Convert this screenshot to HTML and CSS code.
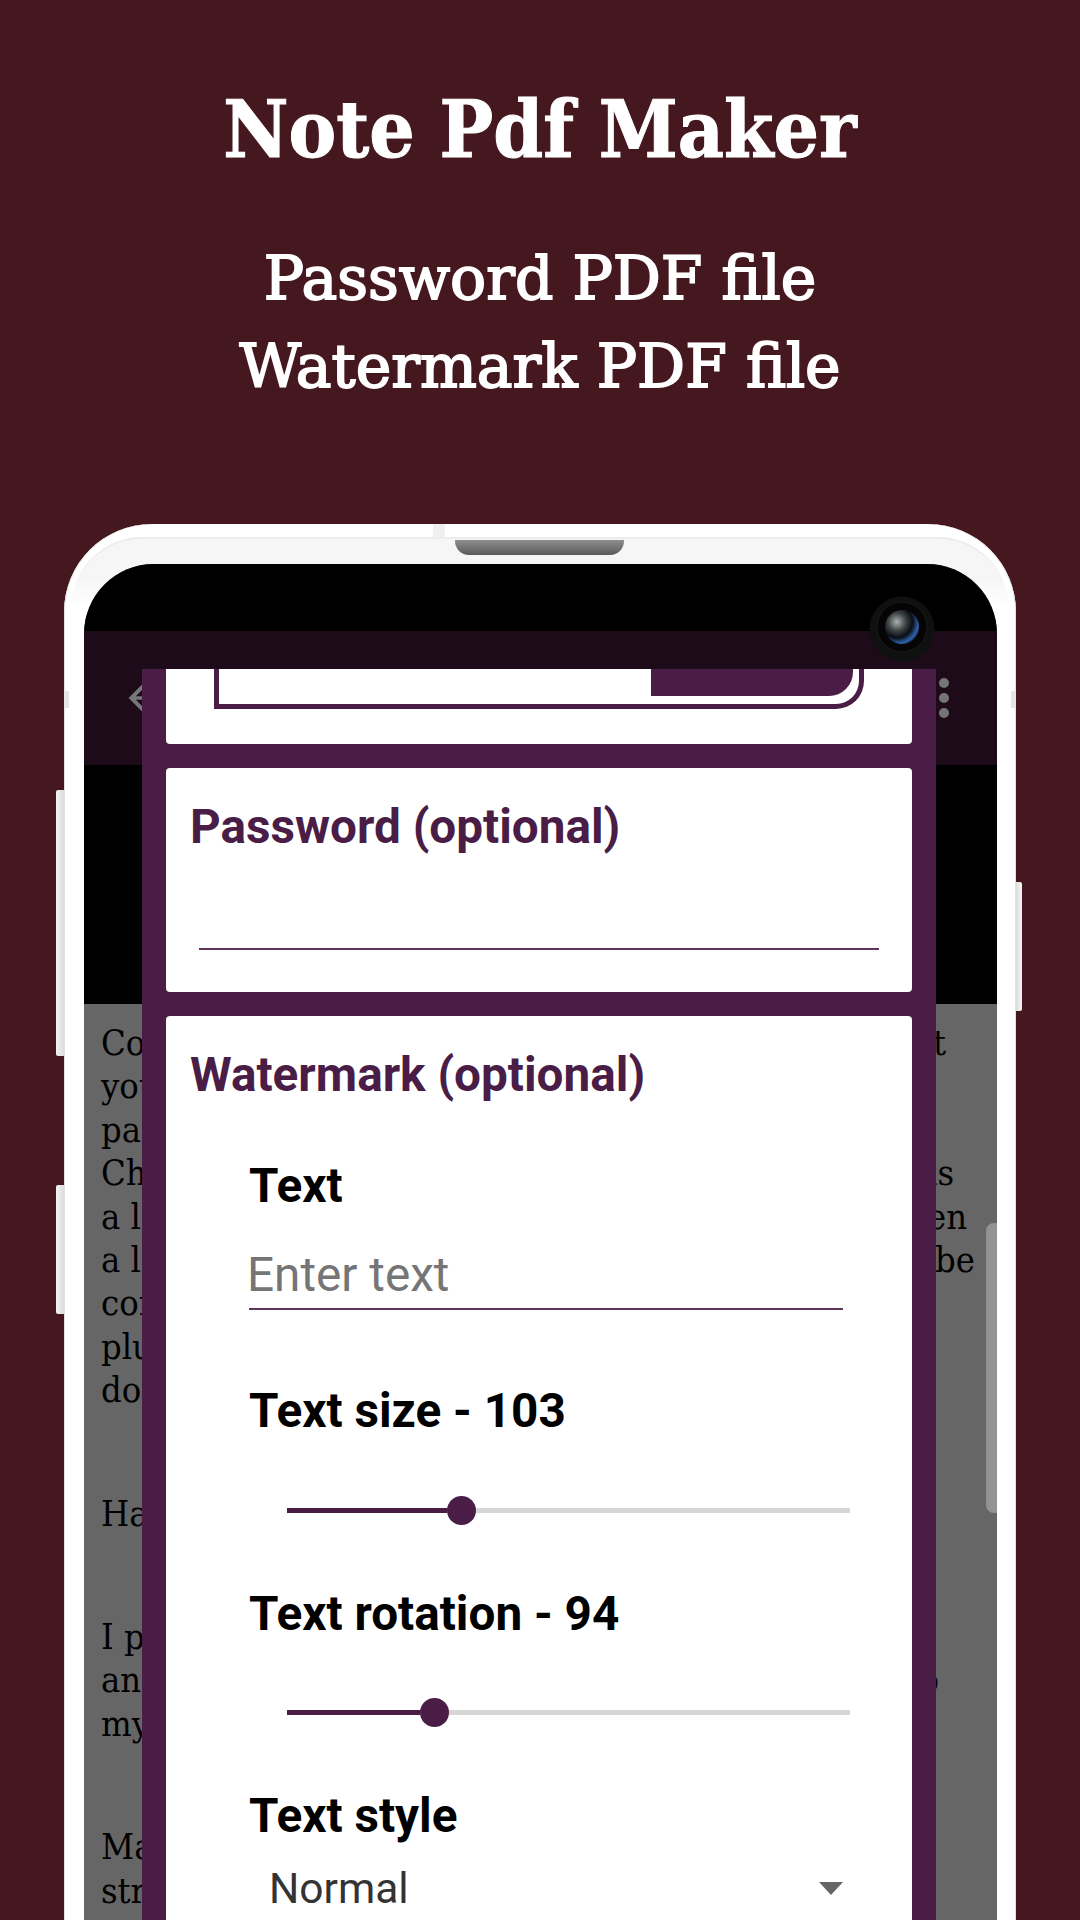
FILE: index.html
```html
<!DOCTYPE html>
<html lang="en">
<head>
<meta charset="utf-8">
<title>Note Pdf Maker</title>
<link rel="stylesheet" href="styles.css">
</head>
<body>
<header class="promo">
  <h1 class="promo-title">Note Pdf Maker</h1>
  <p class="promo-sub">Password PDF file<br>Watermark PDF file</p>
</header>
<section class="phone">
  <div class="rim"></div>
  <div class="tick tick-top"></div>
  <div class="tick tick-left"></div>
  <div class="tick tick-right"></div>
  <div class="side side-l1"></div>
  <div class="side side-l2"></div>
  <div class="side side-r"></div>
  <div class="speaker"></div>
  <svg class="camera" viewBox="0 0 66 66" aria-hidden="true">
    <defs>
      <radialGradient id="lens" cx="35%" cy="35%" r="75%">
        <stop offset="0" stop-color="#a9b3b0"/>
        <stop offset="0.35" stop-color="#3c4444"/>
        <stop offset="0.62" stop-color="#0a0d14"/>
        <stop offset="0.85" stop-color="#2f62ad"/>
        <stop offset="1" stop-color="#0c1524"/>
      </radialGradient>
    </defs>
    <circle cx="33" cy="33" r="32.5" fill="#0f1111"/>
    <circle cx="33" cy="31" r="25" fill="#050505" stroke="#1a1a1a" stroke-width="1"/>
    <circle cx="33" cy="31" r="17" fill="url(#lens)"/>
  </svg>
  <div class="screen">
    <div class="statusbar"></div>
    <div class="appbar">
      <svg class="back" viewBox="0 0 40 40" aria-hidden="true"><path d="M20 4 4 20l16 16 3-3-11-11h24v-4H12l11-11z"/></svg>
      <div class="dots"><i></i><i></i><i></i></div>
    </div>
    <div class="blackband"></div>
    <div class="doc">
      <div class="para">
        <div class="line"><span>Con</span><span class="r-t">it</span></div>
        <div class="line"><span>you</span></div>
        <div class="line"><span>pag</span></div>
        <div class="line"><span>Cha</span><span class="r-s">is</span></div>
        <div class="line"><span>a lo</span><span class="r-en">then</span></div>
        <div class="line"><span>a li</span><span class="r-be">to be</span></div>
        <div class="line"><span>com</span></div>
        <div class="line"><span>plug</span></div>
        <div class="line"><span>doc</span></div>
      </div>
      <div class="para"><div class="line"><span>Hav</span></div></div>
      <div class="para">
        <div class="line"><span>I pu</span></div>
        <div class="line"><span>and</span><span class="r-o">to</span></div>
        <div class="line"><span>my</span></div>
      </div>
      <div class="para">
        <div class="line"><span>Mak</span></div>
        <div class="line"><span>stru</span></div>
      </div>
      <div class="scrollbar"></div>
    </div>
    <div class="dialog">
      <div class="card card-top">
        <div class="box"><div class="box-btn"></div></div>
      </div>
      <div class="card card-pass">
        <h2 class="card-title">Password (optional)</h2>
        <div class="pass-line"></div>
      </div>
      <div class="card card-mark">
        <h2 class="card-title">Watermark (optional)</h2>
        <div class="fields">
          <div class="label label-text">Text</div>
          <div class="input">Enter text</div>
          <div class="label label-size">Text size - 103</div>
          <div class="slider"><div class="fill fill-size"></div><div class="thumb"></div><div class="rest"></div></div>
          <div class="label label-rot">Text rotation - 94</div>
          <div class="slider slider-rot"><div class="fill fill-rot"></div><div class="thumb"></div><div class="rest"></div></div>
          <div class="label label-style">Text style</div>
          <div class="select"><span>Normal</span><span class="caret"></span></div>
        </div>
      </div>
    </div>
  </div>
</section>
</body>
</html>
```
FILE: styles.css
```css
* { box-sizing: border-box; }
html, body { margin: 0; padding: 0; }
body {
  width: 1080px;
  height: 1920px;
  overflow: hidden;
  background: #45171f;
  font-family: Roboto, "Liberation Sans", sans-serif;
}
.promo { height: 524px; padding-top: 79px; text-align: center; color: #fff; font-family: "DejaVu Serif", serif; }
.promo-title { margin: 0; font-size: 79.4px; line-height: 100px; font-weight: 700; font-stretch: condensed; -webkit-text-stroke: 1px #fff; }
.promo-sub { margin: 55px 0 0; font-size: 60px; line-height: 88px; font-weight: 400; -webkit-text-stroke: 1.8px #fff; }

.phone {
  position: relative;
  width: 952px;
  height: 1396px;
  margin-left: 64px;
  padding: 40px 19px 0 20px;
  background: #fff;
  border-radius: 88px 88px 0 0;
  box-shadow: inset 1px 0 0 #e2e2e2, inset -1px 0 0 #e2e2e2;
}
.rim {
  position: absolute;
  top: 13px; left: 8px; right: 8px;
  height: 70px;
  border-top: 2px solid #ececec;
  border-radius: 80px 80px 0 0;
  background: linear-gradient(#f6f6f6 55%, #fff);
}
.tick { position: absolute; background: #e6e6e6; }
.tick-top { top: 0; left: 369px; width: 12px; height: 13px; background: #f0f0f0; }
.tick-left { top: 167px; left: 0; width: 5px; height: 17px; }
.tick-right { top: 167px; right: 0; width: 5px; height: 17px; }
.side { position: absolute; width: 8px; background: linear-gradient(90deg, #f4f4f4, #dcdcdc); border-radius: 2px 0 0 2px; }
.side-l1 { left: -8px; top: 266px; height: 266px; }
.side-l2 { left: -8px; top: 661px; height: 129px; }
.side-r { right: -6px; width: 6px; top: 358px; height: 129px; border-radius: 0 2px 2px 0; background: linear-gradient(90deg, #dcdcdc, #f6f6f6); }
.speaker {
  position: absolute;
  top: 16px; left: 391px;
  width: 169px; height: 15px;
  border-radius: 0 0 14px 14px;
  background: linear-gradient(#8e8e8e, #5a5a5a);
}
.camera { position: absolute; z-index: 3; left: 805px; top: 72px; width: 66px; height: 66px; }

.screen {
  position: relative;
  height: 1356px;
  overflow: hidden;
  border-radius: 70px 70px 0 0;
  background: #666;
  display: flex;
  flex-direction: column;
}
.statusbar { height: 67px; background: #000; flex: none; }
.appbar {
  height: 134px; flex: none;
  background: #1e0b1a;
  display: flex; align-items: center; justify-content: space-between;
  padding: 0 48px 0 41px;
}
.back { width: 36px; height: 36px; margin-top: -1px; fill: #777; }
.dots { display: flex; flex-direction: column; gap: 5px; margin-top: -1px; }
.dots i { display: block; width: 10px; height: 10px; border-radius: 50%; background: #757575; }
.blackband { height: 239px; background: #000; flex: none; }
.doc { position: relative; flex: 1; padding: 17px 16px 0 17px; color: #000; font: 400 36px/43.4px "DejaVu Serif", serif; font-stretch: condensed; }
.para { margin-bottom: 80px; }
.line { display: flex; justify-content: space-between; white-space: nowrap; }
.r-t { margin-right: 35px; }
.r-s { margin-right: 27px; }
.r-en { margin-right: 14px; }
.r-be { margin-right: 6px; }
.r-o { margin-right: 42px; }
.scrollbar {
  position: absolute; right: 0; top: 219px;
  width: 11px; height: 290px;
  background: #939393;
  border-radius: 8px 0 0 8px;
}

.dialog {
  position: absolute; z-index: 2;
  left: 58px; top: 105px;
  width: 794px; height: 1300px;
  padding: 0 24px;
  background: #4a1d47;
  display: flex; flex-direction: column; gap: 23.5px;
}
.card { background: #fff; border-radius: 4px; flex: none; }
.card-top { height: 75px; border-radius: 0 0 4px 4px; }
.box {
  margin: 0 48px 0 48px;
  height: 40px;
  border: 5px solid #4a1d47;
  border-top: 0;
  border-radius: 0 0 28px 0;
  padding: 0 6px 7px 0;
  display: flex; justify-content: flex-end;
}
.box-btn { width: 202px; height: 27px; background: #4a1d47; border-radius: 0 0 24px 0; }
.card-pass { height: 224.5px; padding: 31px 24px 0 24px; }
.card-title { margin: 0; font-size: 47.7px; line-height: 56px; font-weight: 700; color: #4a1d47; }
.pass-line { height: 2px; margin: 93px 9px 0 9px; background: #5c3559; }
.card-mark { height: 1000px; padding: 31px 24px 0 24px; }
.fields { padding: 0 0 0 59px; }
.label { font-size: 47.7px; line-height: 56px; font-weight: 700; color: #000; }
.label-text { margin-top: 55.4px; }
.input { width: 594px; height: 67.3px; margin-top: 29px; font-size: 47.7px; line-height: 64px; color: #757575; text-indent: -2px; border-bottom: 2px solid #5c3559; }
.label-size { margin-top: 73px; }
.slider { display: flex; align-items: center; width: 563px; height: 30px; margin: 56.3px 0 0 38px; }
.slider-rot { margin-top: 55.6px; }
.fill { height: 5px; background: #4a1d47; flex: none; }
.fill-size { width: 160px; }
.fill-rot { width: 133px; }
.thumb { width: 29px; height: 29px; border-radius: 50%; background: #4a1d47; flex: none; }
.rest { height: 5px; background: #d6d6d6; flex: 1; }
.label-rot { margin-top: 60.4px; }
.label-style { margin-top: 60.6px; }
.select { display: flex; justify-content: space-between; align-items: center; width: 574px; margin: 16.5px 0 0 20px; font-size: 42.5px; line-height: 56px; color: #333; }
.caret { width: 0; height: 0; border-left: 12px solid transparent; border-right: 12px solid transparent; border-top: 13px solid #666; }
```
